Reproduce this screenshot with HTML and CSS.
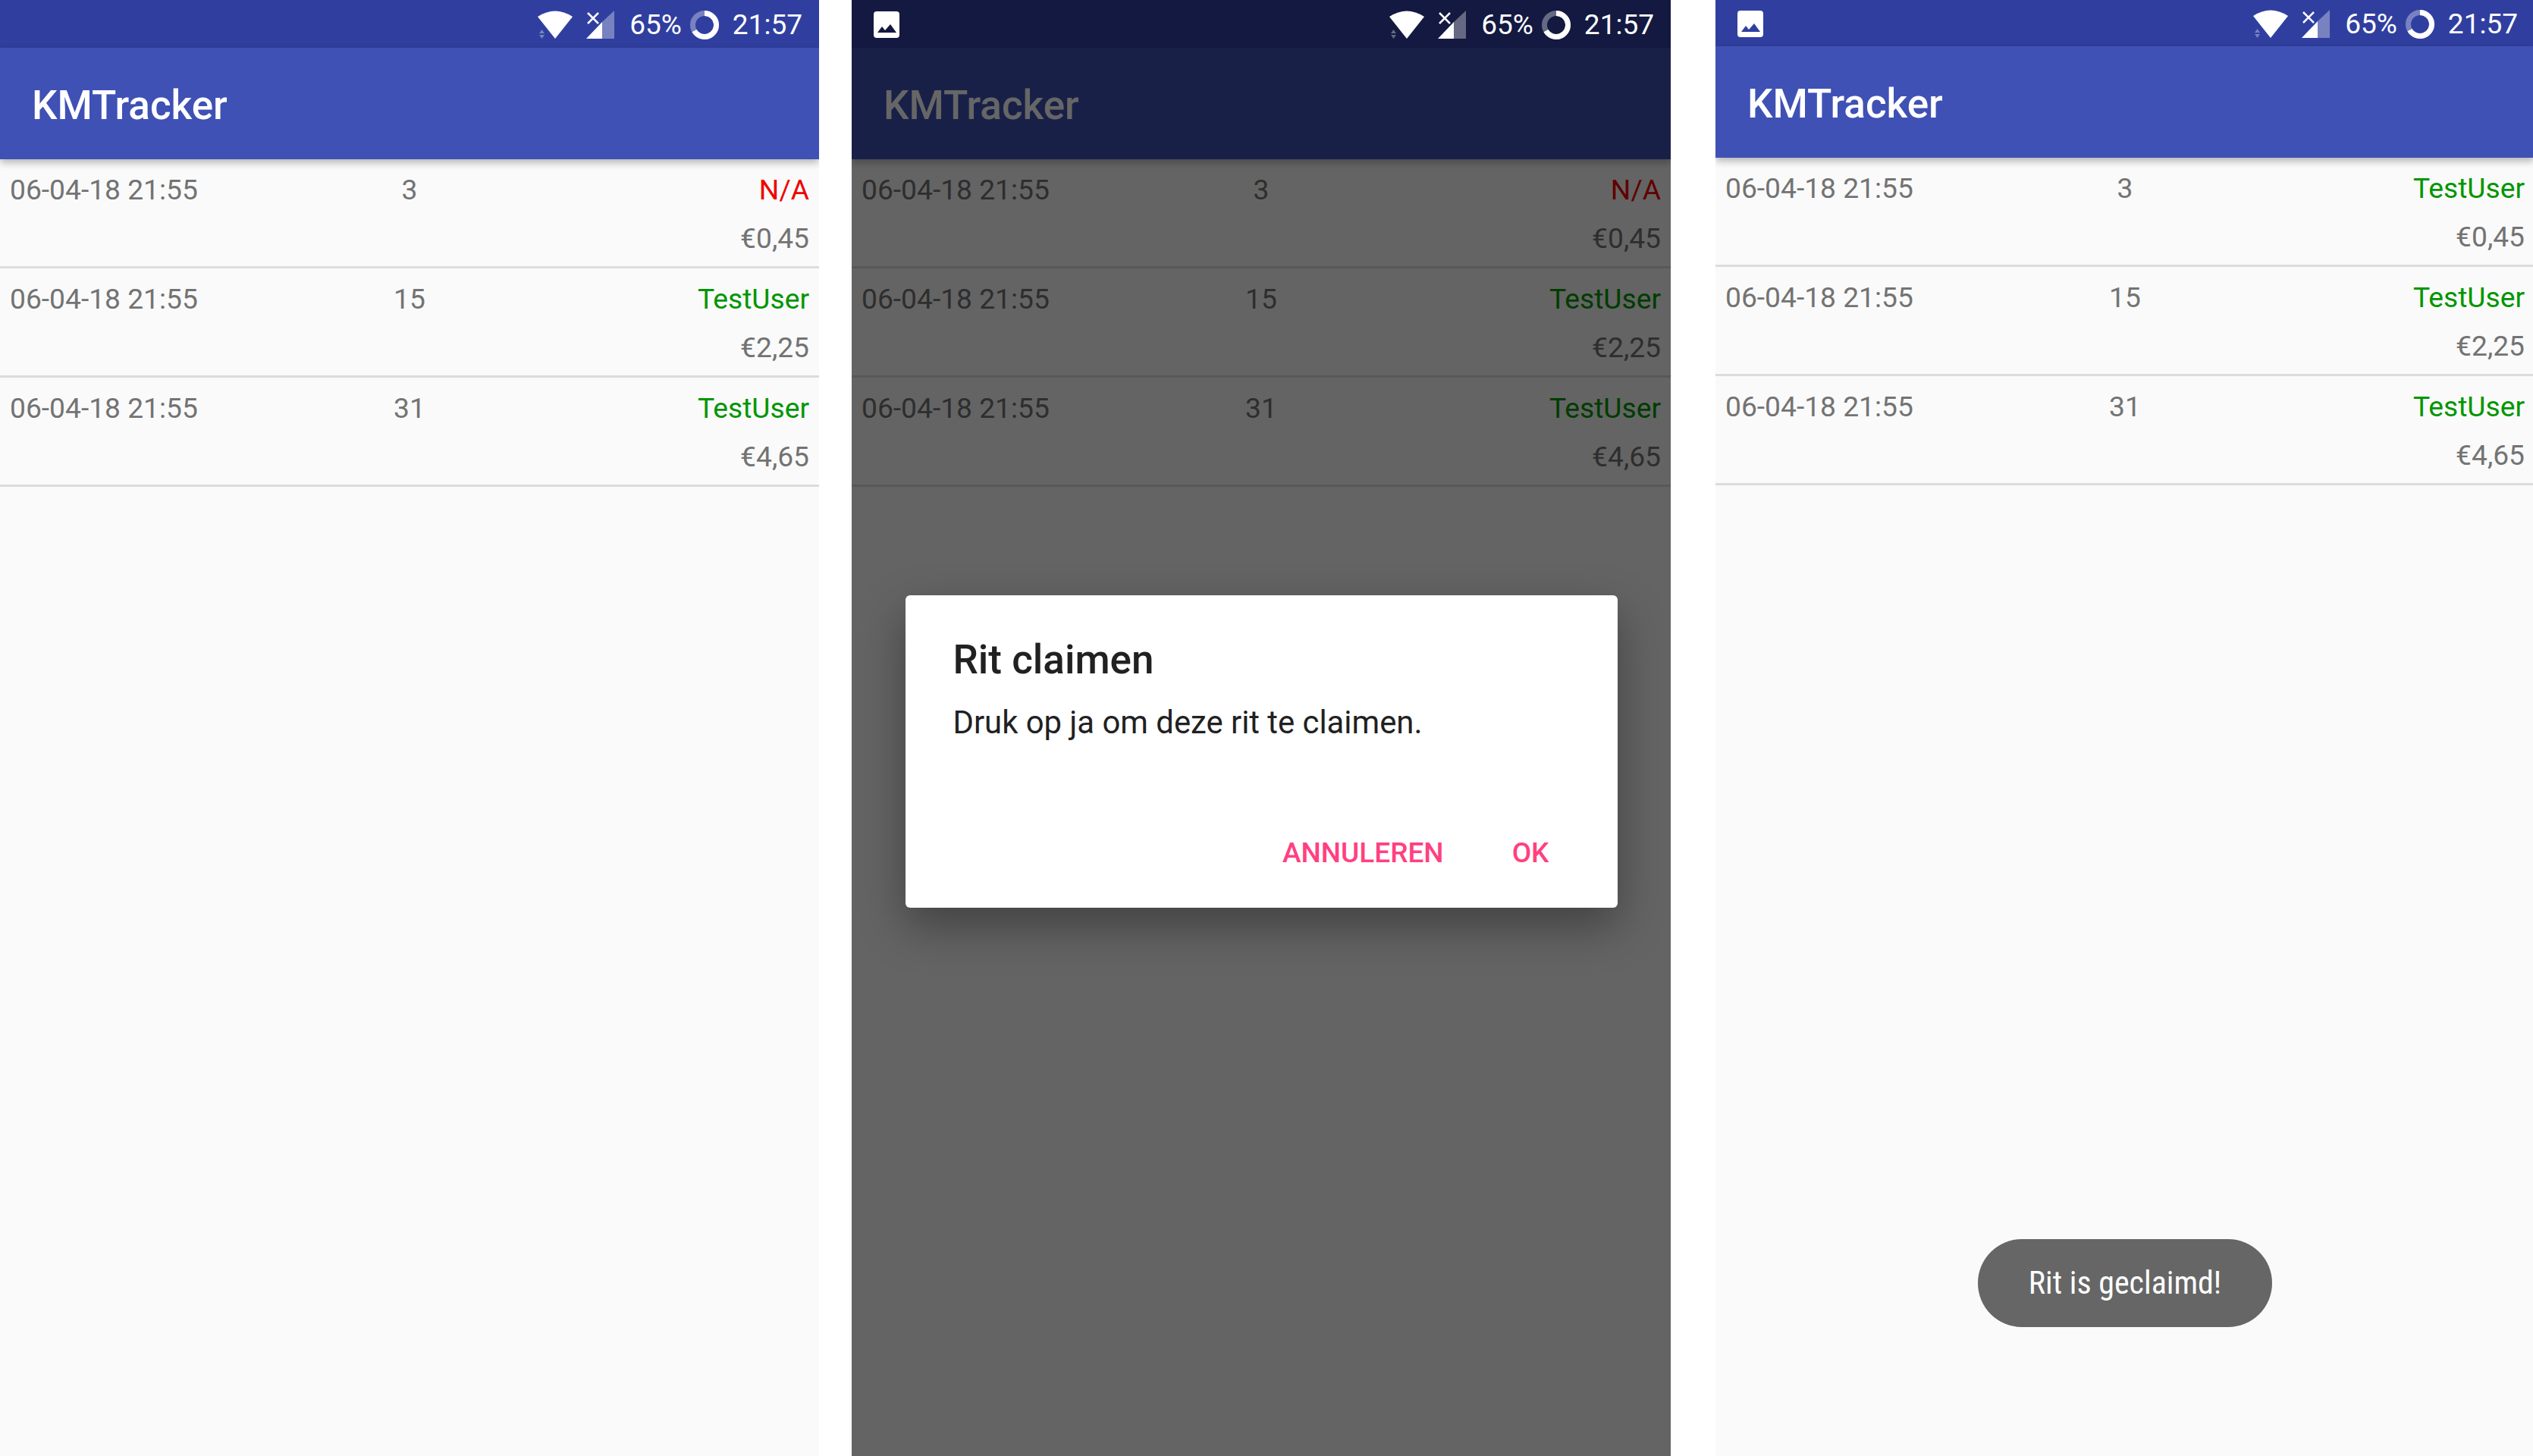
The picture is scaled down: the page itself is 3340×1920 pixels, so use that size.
FILE: index.html
```html
<!DOCTYPE html>
<html lang="en">
<head>
    <meta charset="utf-8"/>
    <title>KMTracker</title>
    <link rel="stylesheet" href="styles.css">
</head>
<body>
    <div class="screens">

        <!-- first screen -->
        <div class="phone">
            <div class="statusBar">
                <div class="statusLeft"></div>
                <svg class="wifi" viewBox="0 0 46 38"><path class="solid" d="M0 8 Q23 -7 46 8 L23 37 Z"/><path class="faint" d="M2 30 L5.5 25 L9 30 Z M2 32 H9 L5.5 37 Z"/></svg>
                <svg class="signal" viewBox="0 0 38 38"><path class="faint" d="M38 0 V37 H22 V15 Z"/><path class="solid" d="M22 15 V37 H1 Z"/><path class="cross" d="M3 3 L17 17 M17 3 L3 17"/></svg>
                <span class="battery">65%</span>
                <svg class="circle" viewBox="0 0 38 38"><circle class="ringFaint" cx="19" cy="19" r="15.5"/><path class="ring" d="M19 3.5 A15.5 15.5 0 1 1 5.5 26.6"/></svg>
                <span class="clock">21:57</span>
            </div>
            <div class="toolbar">KMTracker</div>
            <ul class="rideList">
                <li class="ride">
                    <div class="rideTop"><span class="rideDate">06-04-18 21:55</span><span class="rideKm">3</span><span class="rideUser none">N/A</span></div>
                    <div class="ridePrice">€0,45</div>
                </li>
                <li class="ride">
                    <div class="rideTop"><span class="rideDate">06-04-18 21:55</span><span class="rideKm">15</span><span class="rideUser">TestUser</span></div>
                    <div class="ridePrice">€2,25</div>
                </li>
                <li class="ride">
                    <div class="rideTop"><span class="rideDate">06-04-18 21:55</span><span class="rideKm">31</span><span class="rideUser">TestUser</span></div>
                    <div class="ridePrice">€4,65</div>
                </li>
            </ul>
        </div>

        <!-- second screen, dialog open -->
        <div class="phone second">
            <div class="statusBar dimmed">
                <div class="statusLeft">
                    <svg class="picture" viewBox="0 0 34 35"><path class="solid" fill-rule="evenodd" d="M4 0 H30 Q34 0 34 4 V31 Q34 35 30 35 H4 Q0 35 0 31 V4 Q0 0 4 0 Z M5 28 H30 L22 17 L15 25 L11 20 Z"/></svg>
                </div>
                <svg class="wifi" viewBox="0 0 46 38"><path class="solid" d="M0 8 Q23 -7 46 8 L23 37 Z"/><path class="faint" d="M2 30 L5.5 25 L9 30 Z M2 32 H9 L5.5 37 Z"/></svg>
                <svg class="signal" viewBox="0 0 38 38"><path class="faint" d="M38 0 V37 H22 V15 Z"/><path class="solid" d="M22 15 V37 H1 Z"/><path class="cross" d="M3 3 L17 17 M17 3 L3 17"/></svg>
                <span class="battery">65%</span>
                <svg class="circle" viewBox="0 0 38 38"><circle class="ringFaint" cx="19" cy="19" r="15.5"/><path class="ring" d="M19 3.5 A15.5 15.5 0 1 1 5.5 26.6"/></svg>
                <span class="clock">21:57</span>
            </div>
            <div class="toolbar">KMTracker</div>
            <ul class="rideList">
                <li class="ride">
                    <div class="rideTop"><span class="rideDate">06-04-18 21:55</span><span class="rideKm">3</span><span class="rideUser none">N/A</span></div>
                    <div class="ridePrice">€0,45</div>
                </li>
                <li class="ride">
                    <div class="rideTop"><span class="rideDate">06-04-18 21:55</span><span class="rideKm">15</span><span class="rideUser">TestUser</span></div>
                    <div class="ridePrice">€2,25</div>
                </li>
                <li class="ride">
                    <div class="rideTop"><span class="rideDate">06-04-18 21:55</span><span class="rideKm">31</span><span class="rideUser">TestUser</span></div>
                    <div class="ridePrice">€4,65</div>
                </li>
            </ul>
            <div class="scrim">
                <div class="dialog">
                    <div class="dialogTitle">Rit claimen</div>
                    <div class="dialogText">Druk op ja om deze rit te claimen.</div>
                    <div class="dialogButtons">
                        <span class="dialogButton">ANNULEREN</span>
                        <span class="dialogButton">OK</span>
                    </div>
                </div>
            </div>
        </div>

        <!-- third screen, toast -->
        <div class="phone third">
            <div class="statusBar">
                <div class="statusLeft">
                    <svg class="picture" viewBox="0 0 34 35"><path class="solid" fill-rule="evenodd" d="M4 0 H30 Q34 0 34 4 V31 Q34 35 30 35 H4 Q0 35 0 31 V4 Q0 0 4 0 Z M5 28 H30 L22 17 L15 25 L11 20 Z"/></svg>
                </div>
                <svg class="wifi" viewBox="0 0 46 38"><path class="solid" d="M0 8 Q23 -7 46 8 L23 37 Z"/><path class="faint" d="M2 30 L5.5 25 L9 30 Z M2 32 H9 L5.5 37 Z"/></svg>
                <svg class="signal" viewBox="0 0 38 38"><path class="faint" d="M38 0 V37 H22 V15 Z"/><path class="solid" d="M22 15 V37 H1 Z"/><path class="cross" d="M3 3 L17 17 M17 3 L3 17"/></svg>
                <span class="battery">65%</span>
                <svg class="circle" viewBox="0 0 38 38"><circle class="ringFaint" cx="19" cy="19" r="15.5"/><path class="ring" d="M19 3.5 A15.5 15.5 0 1 1 5.5 26.6"/></svg>
                <span class="clock">21:57</span>
            </div>
            <div class="toolbar">KMTracker</div>
            <ul class="rideList">
                <li class="ride">
                    <div class="rideTop"><span class="rideDate">06-04-18 21:55</span><span class="rideKm">3</span><span class="rideUser">TestUser</span></div>
                    <div class="ridePrice">€0,45</div>
                </li>
                <li class="ride">
                    <div class="rideTop"><span class="rideDate">06-04-18 21:55</span><span class="rideKm">15</span><span class="rideUser">TestUser</span></div>
                    <div class="ridePrice">€2,25</div>
                </li>
                <li class="ride">
                    <div class="rideTop"><span class="rideDate">06-04-18 21:55</span><span class="rideKm">31</span><span class="rideUser">TestUser</span></div>
                    <div class="ridePrice">€4,65</div>
                </li>
            </ul>
            <div class="toast">Rit is geclaimd!</div>
        </div>

    </div>
</body>
</html>
```

FILE: styles.css
```css
html, body
{
    margin: 0;
    height: 100%;
    background-color: #ffffff;
    overflow: hidden;
}

.screens
{
    display: flex;
    width: 3340px;
    height: 1920px;
    overflow: hidden;
    font-family: Roboto, "Noto Sans", sans-serif;
}

.phone
{
    position: relative;
    flex: none;
    display: flex;
    flex-direction: column;
    width: 1080px;
    height: 1920px;
    overflow: hidden;
    background-color: #fafafa;
}

.second
{
    margin-left: 43px;
}

.third
{
    margin-left: 59px;
}

.statusBar
{
    flex: none;
    display: flex;
    align-items: center;
    height: 63px;
    padding: 2px 22px 0 29px;
    box-sizing: border-box;
    background-color: #303f9f;
    color: #ffffff;
    font-size: 37px;
}

.statusBar.dimmed
{
    position: relative;
    z-index: 2;
    background-color: #131940;
}

.third .statusBar
{
    height: 61px;
    padding-right: 22px;
}

.statusLeft
{
    flex: 1;
    display: flex;
}

.solid
{
    fill: #ffffff;
}

.faint
{
    fill: #ffffff;
    opacity: .35;
}

.cross
{
    fill: none;
    stroke: #ffffff;
    stroke-width: 2.500;
}

.ringFaint
{
    fill: none;
    stroke: #ffffff;
    stroke-width: 7;
    opacity: .35;
}

.ring
{
    fill: none;
    stroke: #ffffff;
    stroke-width: 7;
}

.picture
{
    width: 34px;
    height: 35px;
}

.wifi
{
    width: 46px;
    height: 38px;
}

.signal
{
    width: 38px;
    height: 38px;
    margin-left: 17px;
}

.battery
{
    margin-left: 20px;
}

.circle
{
    width: 38px;
    height: 38px;
    margin-left: 11px;
}

.clock
{
    margin-left: 18px;
}

.toolbar
{
    position: relative;
    flex: none;
    display: flex;
    align-items: center;
    height: 147px;
    padding: 4px 0 0 42px;
    box-sizing: border-box;
    background-color: #3f51b5;
    box-shadow: 0 4px 10px rgba(0, 0, 0, .3);
    color: #ffffff;
    font-size: 53px;
    font-weight: 500;
}

.rideList
{
    margin: 0;
    padding: 0;
    list-style-type: none;
}

.ride
{
    height: 144px;
    padding: 0 13px;
    box-sizing: border-box;
    border-bottom: 3px solid #dcdcdc;
    color: #737373;
    font-size: 37.200px;
}

.rideTop
{
    display: grid;
    grid-template-columns: 1fr 1fr 1fr;
    padding-top: 18px;
    line-height: 44px;
}

.rideKm
{
    text-align: center;
}

.rideUser
{
    text-align: right;
    color: #009600;
}

.rideUser.none
{
    color: #f00000;
}

.ridePrice
{
    margin-top: 20px;
    line-height: 44px;
    text-align: right;
}

.scrim
{
    position: absolute;
    left: 0;
    right: 0;
    top: 0;
    bottom: 0;
    z-index: 1;
    display: flex;
    align-items: center;
    justify-content: center;
    padding-top: 62px;
    box-sizing: border-box;
    background-color: rgba(0, 0, 0, .6);
}

.dialog
{
    display: flex;
    flex-direction: column;
    width: 939px;
    height: 412px;
    padding: 53px 63px 0;
    box-sizing: border-box;
    border-radius: 6px;
    background-color: #ffffff;
    box-shadow: 0 24px 60px rgba(0, 0, 0, .35);
    color: #212121;
}

.dialogTitle
{
    font-size: 53px;
    font-weight: 500;
    line-height: 64px;
}

.dialogText
{
    margin-top: 23px;
    font-size: 41.800px;
    line-height: 56px;
}

.dialogButtons
{
    display: flex;
    justify-content: flex-end;
    gap: 90px;
    margin-top: 122px;
    margin-right: 27px;
    color: #ff4081;
    font-size: 37px;
    font-weight: 500;
    line-height: 44px;
}

.toast
{
    position: absolute;
    left: 346px;
    top: 1634px;
    width: 388px;
    height: 116px;
    border-radius: 58px;
    background-color: #666666;
    color: #ffffff;
    font-size: 42px;
    font-stretch: condensed;
    line-height: 116px;
    text-align: center;
}
```
